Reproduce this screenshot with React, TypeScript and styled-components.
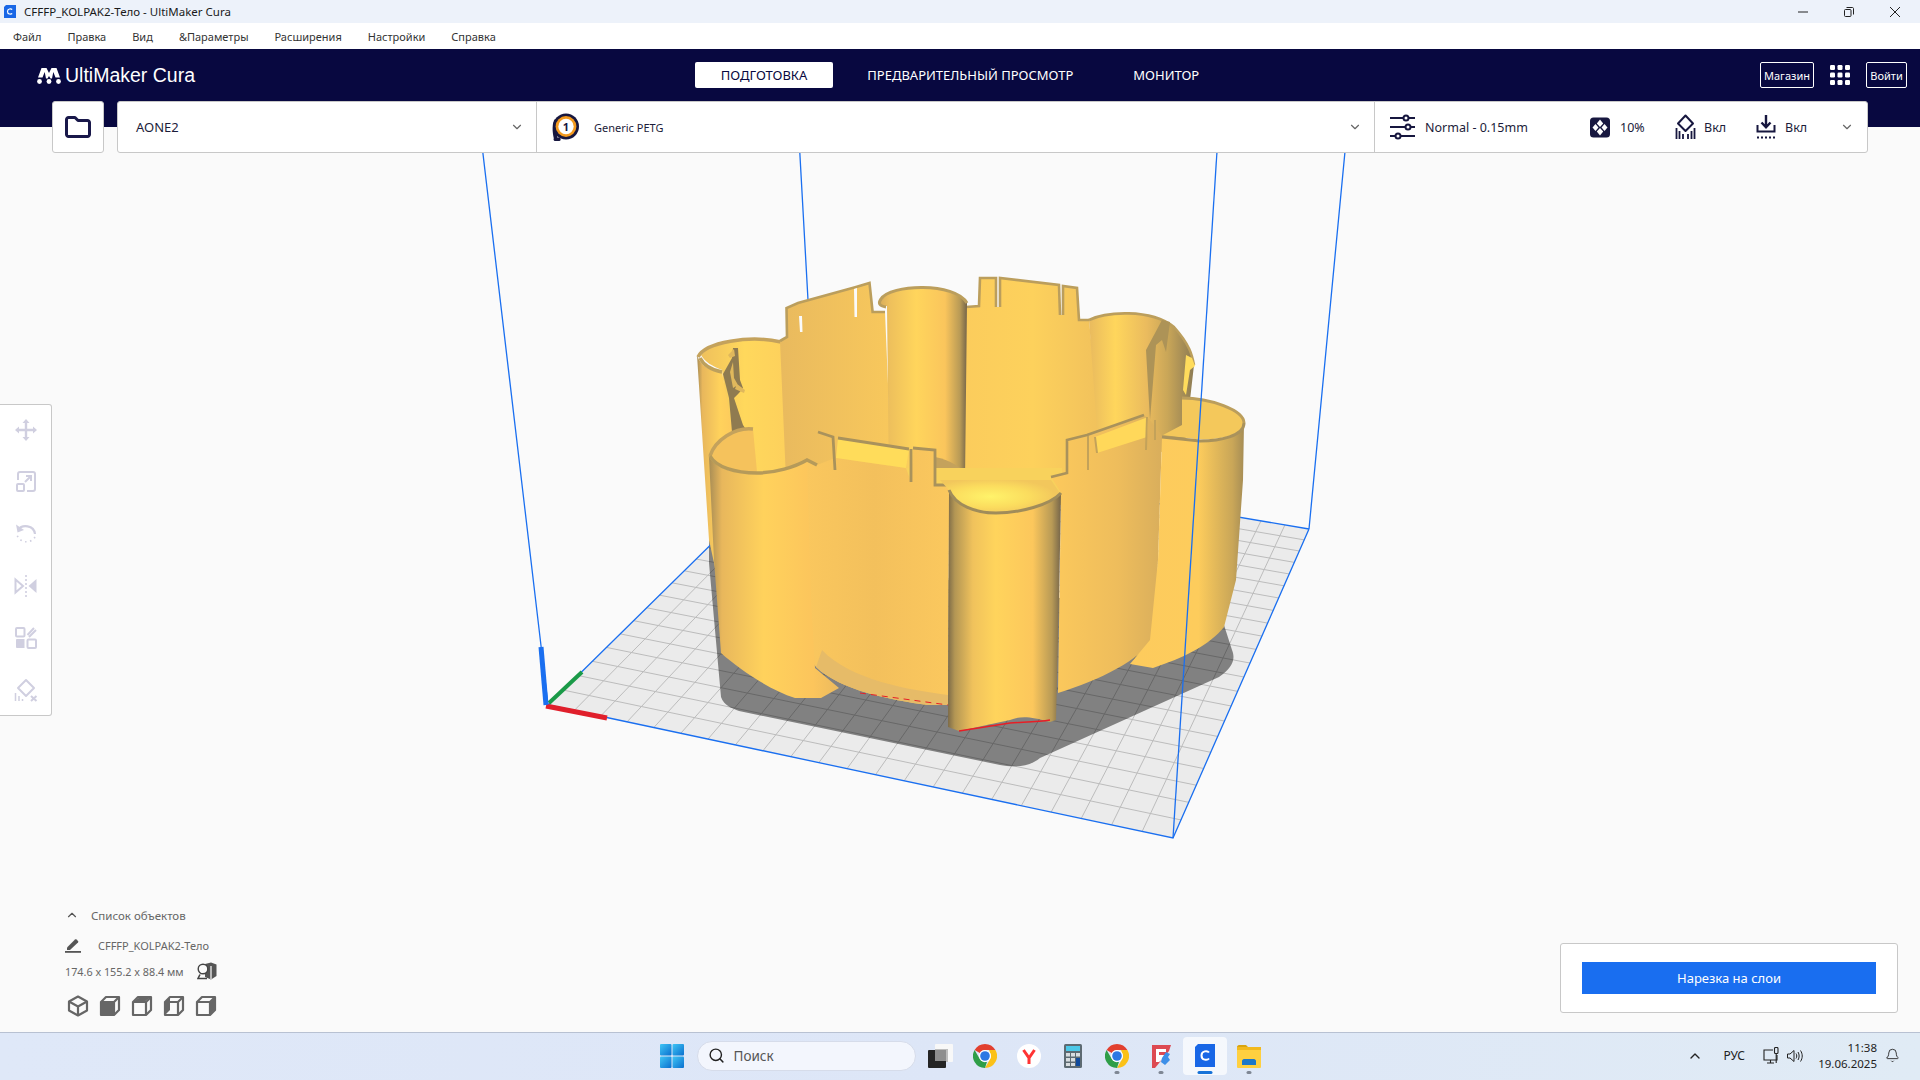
import React from 'react'
import styled, { createGlobalStyle } from 'styled-components'
import { ChevronDown, ChevronUp, Search, Bell } from 'lucide-react'

const GlobalStyle = createGlobalStyle`
html, body {
  margin: 0;
  padding: 0;
  width: 100%;
  height: 100%;
  overflow: hidden;
  font-family: "Noto Sans", "Open Sans", sans-serif;
}
#root { height: 100%; }
`

// plate corners in page pixels, the grid is a projective map of the unit square
const corners = { a: [548, 705], b: [1173, 838], c: [1309, 529], d: [812, 445] }

const project = (u: number, v: number) => {
    const [x0, y0] = corners.a
    const [x1, y1] = corners.b
    const [x2, y2] = corners.c
    const [x3, y3] = corners.d
    const dx1 = x1 - x2, dx2 = x3 - x2, sx = x0 - x1 + x2 - x3
    const dy1 = y1 - y2, dy2 = y3 - y2, sy = y0 - y1 + y2 - y3
    const den = dx1 * dy2 - dx2 * dy1
    const g = (sx * dy2 - dx2 * sy) / den
    const h = (dx1 * sy - sx * dy1) / den
    const a = x1 - x0 + g * x1, b = x3 - x0 + h * x3
    const d = y1 - y0 + g * y1, e = y3 - y0 + h * y3
    const w = g * u + h * v + 1
    return [(a * u + b * v + x0) / w, (d * u + e * v + y0) / w]
}

const gridLines = (() => {
    const out: string[] = []
    const n = 22
    for (let i = 1; i < n; i++) {
        const [ax, ay] = project(i / n, 0)
        const [bx, by] = project(i / n, 1)
        const [cx, cy] = project(0, i / n)
        const [dx, dy] = project(1, i / n)
        out.push(`M${ax} ${ay}L${bx} ${by}`, `M${cx} ${cy}L${dx} ${dy}`)
    }
    return out.join('')
})()

const Scene = () => (
    <SceneSvg viewBox="0 127 1920 905">
        <defs>
            <linearGradient id="cyl" x1="0" x2="1" y1="0" y2="0">
                <stop offset="0" stopColor="#7d6b48" />
                <stop offset=".06" stopColor="#b39654" />
                <stop offset=".22" stopColor="#f0c25c" />
                <stop offset=".42" stopColor="#ffd45c" />
                <stop offset=".75" stopColor="#fcc75c" />
                <stop offset=".92" stopColor="#b89a56" />
                <stop offset="1" stopColor="#75654a" />
            </linearGradient>
            <linearGradient id="cylBack" x1="0" x2="1" y1="0" y2="0">
                <stop offset="0" stopColor="#d8ad5c" />
                <stop offset=".12" stopColor="#eec05c" />
                <stop offset=".42" stopColor="#ffd55c" />
                <stop offset=".75" stopColor="#fac55c" />
                <stop offset=".92" stopColor="#b89a56" />
                <stop offset="1" stopColor="#75654a" />
            </linearGradient>
            <linearGradient id="insideLeft" x1="0" x2="1" y1="0" y2="0">
                <stop offset="0" stopColor="#efc05c" />
                <stop offset=".5" stopColor="#ffd85c" />
                <stop offset="1" stopColor="#fdd05c" />
            </linearGradient>
            <linearGradient id="lobeLeft" x1="0" x2="1" y1="0" y2="0">
                <stop offset="0" stopColor="#a88d55" />
                <stop offset=".1" stopColor="#e8b75c" />
                <stop offset=".42" stopColor="#ffd25c" />
                <stop offset=".8" stopColor="#fcc55c" />
                <stop offset="1" stopColor="#ebba5e" />
            </linearGradient>
            <linearGradient id="wallBack" x1="0" x2="1" y1="0" y2="0">
                <stop offset="0" stopColor="#e9ba5e" />
                <stop offset="1" stopColor="#f8c85c" />
            </linearGradient>
            <linearGradient id="wallMid" x1="0" x2="1" y1="0" y2="0">
                <stop offset="0" stopColor="#fbcc5c" />
                <stop offset=".5" stopColor="#fdd15c" />
                <stop offset="1" stopColor="#f0c05c" />
            </linearGradient>
            <linearGradient id="lobeBack" x1="0" x2="1" y1="0" y2="0">
                <stop offset="0" stopColor="#e9ba5e" />
                <stop offset=".25" stopColor="#ffd65c" />
                <stop offset=".55" stopColor="#eabb5e" />
                <stop offset=".75" stopColor="#c9a658" />
                <stop offset="1" stopColor="#8c7b54" />
            </linearGradient>
            <linearGradient id="wallRight" x1="0" x2="1" y1="0" y2="0">
                <stop offset="0" stopColor="#fcc95c" />
                <stop offset=".6" stopColor="#eebd5c" />
                <stop offset="1" stopColor="#d9ae5c" />
            </linearGradient>
            <linearGradient id="wallFront" x1="0" x2="1" y1="0" y2="0">
                <stop offset="0" stopColor="#fbc85e" />
                <stop offset=".5" stopColor="#f3c05c" />
                <stop offset="1" stopColor="#fbc85e" />
            </linearGradient>
            <linearGradient id="lobeRight" x1="0" x2="1" y1="0" y2="0">
                <stop offset="0" stopColor="#fdcb5d" />
                <stop offset=".6" stopColor="#fdcc5c" />
                <stop offset=".9" stopColor="#c9a658" />
                <stop offset="1" stopColor="#a68d55" />
            </linearGradient>
            <radialGradient id="floor" cx=".42" cy=".5" r=".55">
                <stop offset="0" stopColor="#fff36a" />
                <stop offset=".6" stopColor="#fbdc5e" />
                <stop offset="1" stopColor="#f2c75c" />
            </radialGradient>
        </defs>

        <path d="M548 705L1173 838L1309 529L812 445Z" fill="#ebebeb" />
        <path d={gridLines} stroke="#bcbcbc" strokeWidth="1" fill="none" />
        <path
            d="M709 563L721 697C724 706 732 708 739 711L1000 765C1012 767 1028 768 1040 758L1219 677C1232 668 1236 660 1232 650L1224 625L709 540Z"
            fill="#000"
            opacity=".45"
        />
        <path d="M548 705L1173 838L1309 529M548 705L812 445L1309 529" stroke="#1a6ff0" strokeWidth="1.300" fill="none" />
        <path d="M479 120L548 705M1348 120L1309 529M798 120L808 300" stroke="#1a6ff0" strokeWidth="1.300" fill="none" />

        <path d="M546 706L607 718" stroke="#e01f2b" strokeWidth="5" />
        <path d="M549 703L582 672" stroke="#1a9a48" strokeWidth="4" />
        <path d="M541 647L546 705" stroke="#1a6ff0" strokeWidth="5" />

        {/* back lobe on the left */}
        <path d="M701 355C712 340 750 336 781 341L788 500L735 490L722 370C712 366 705 362 701 355Z" fill="url(#insideLeft)" />
        <path d="M697 355C700 366 712 372 722 372L732 430L745 428L752 432L722 470L716 572L709 540Z" fill="url(#lobeLeft)" />
        <path d="M698 357C705 342 750 335 781 342" stroke="#c4a25c" strokeWidth="3.500" fill="none" />
        <path d="M700 358C704 366 712 370 722 372" stroke="#bda05c" strokeWidth="3.500" fill="none" />
        <path d="M733 348L738 348L740 380L743 388L739 393L734 398L743 425L745 428L732 432L729 398L723 374L732 358Z" fill="#8f7b50" />
        <path d="M728 355L734 349L735 356L730 358ZM733 362L734 378L738 385L733 388L730 372ZM737 384L745 390L744 393L735 389Z" fill="#e0b85c" />

        {/* back wall */}
        <path d="M780 341L787 337L786.500 308L798 303L856 287L869.500 283L872.600 312L885 312L892 480L786 480Z" fill="url(#wallBack)" />
        <path d="M780 341L787 337L786.500 308L798 303L856 287L869.500 283L872.600 312L885 312" stroke="#bb9e5c" strokeWidth="2.600" fill="none" />
        <path d="M799 316L802 316L802.500 332L800 332ZM854 289L857 288L857 317L854.500 317Z" fill="#fafafa" />

        <path d="M966 307L979 306L980 278L996 278L996 307L1000 307L1000 278L1059 285L1060 315L1063 315L1063 286L1077 288L1079 320L1089 320L1105 480L960 480Z" fill="url(#wallMid)" />
        <path d="M966 307L979 306L980 278L996 278L996 307M1000 307L1000 278L1059 285L1060 315M1063 315L1063 286L1077 288L1079 320L1089 320" stroke="#bb9e5c" strokeWidth="2.600" fill="none" />

        {/* cylinder at the back */}
        <path d="M887 306L882 306C879 305 879 302 880 300C888 284 955 282 967 302L965 480L889 480Z" fill="url(#cylBack)" />
        <path d="M886 307C879 306 878 303 881 299C890 284 955 282 967 303" stroke="#bb9e5c" strokeWidth="3" fill="none" />
        <path d="M935 457C950 460 962 468 965 473L965 482L935 482Z" fill="#c4a25c" />

        {/* lobe at the back right */}
        <path d="M1089 320C1105 312 1150 308 1174 327C1190 345 1192 355 1194 365L1190 400L1185 445L1100 470Z" fill="url(#lobeBack)" />
        <path d="M1089 320C1105 312 1150 308 1174 327C1190 345 1192 355 1194 365" stroke="#bb9e5c" strokeWidth="2.600" fill="none" />
        <path d="M1162 320L1170 322L1166 352L1162 340L1156 345L1150 420L1146 350Z" fill="#ad9357" />
        <path d="M1186 355L1192 358L1195 366L1190 370L1186 395L1183 390Z" fill="#ffdc5c" />

        {/* lobe on the right, inside */}
        <path d="M1182 398C1210 398 1244 410 1244 423C1244 436 1215 441 1195 439L1163 435L1182 425Z" fill="#f4c85b" />
        <path d="M1182 398C1210 398 1244 410 1244 423" stroke="#bb9e5c" strokeWidth="3" fill="none" />

        {/* floor under everything in front */}
        <path d="M836 468L1062 468L1062 505L836 505Z" fill="#f8d25c" />

        {/* front wall to the right */}
        <path d="M1051 477L1067 473L1067 440L1087 435L1144 415L1150 420L1160 433L1162 437L1158 560L1155 637C1140 660 1100 680 1058 693L1061 493Z" fill="url(#wallRight)" />
        <path d="M1095 437L1148 417L1147 437L1097 453Z" fill="#ffd85a" />
        <path d="M1051 477L1067 473L1067 440L1087 435L1144 415" stroke="#a9925c" strokeWidth="2.600" fill="none" />
        <path d="M1088 436L1088 470M1095 437L1097 453M1147 417L1146 450M1155 420L1155 440" stroke="#c3a25a" strokeWidth="2" fill="none" />

        <path d="M1162 437L1200 441C1220 441 1244 436 1244 423L1243 480L1236 580L1224 627C1210 645 1183 658 1153 668L1130 664L1150 640L1158 560Z" fill="url(#lobeRight)" />
        <path d="M1162 437L1200 441C1220 441 1244 436 1244 423" stroke="#a9925c" strokeWidth="3" fill="none" />

        {/* front wall to the left */}
        <path d="M796 470L806 460L817 465L835 458L906 468L911 482L913 448L935 450L935 485L952 485L949 520L948 705L928 705C890 700 840 690 816 667L796 640Z" fill="url(#wallFront)" />
        <path d="M838 438L909 449L906 468L836 458Z" fill="#ffdc5a" />
        <path d="M818 432L833 437L835 470M838 438L909 449M911 449L911 482M913 448L935 450L935 485L952 485" stroke="#a9925c" strokeWidth="2.800" fill="none" />
        <path d="M816 667C840 690 890 700 928 705L948 705L948 695C910 690 850 680 822 650Z" fill="#e6bb68" />

        {/* lobe at the front left */}
        <path d="M710 455C715 440 735 427 753 429L757 472C735 472 716 466 710 455Z" fill="#f5c25c" />
        <path d="M709 457C716 468 735 474 757 474C775 474 795 467 807 461L811 600L815 668L839 688L821 698L795 698C770 690 740 670 721 653L714 560Z" fill="url(#lobeLeft)" />
        <path d="M710 456C715 440 735 427 753 429" stroke="#c4a25c" strokeWidth="3.500" fill="none" />
        <path d="M710 456C716 467 735 473 757 473C775 473 795 467 807 460L817 465" stroke="#b59a5a" strokeWidth="3.500" fill="none" />

        {/* floor and the cylinder in front */}
        <path d="M940 480L1051 480L1060 493C1050 505 1020 513 996 513C975 513 955 505 949 490Z" fill="url(#floor)" />
        <path d="M949 490C955 505 975 513 996 513C1020 513 1050 505 1061 493L1059 600L1056 720L1050 722C1030 716 1020 716 1010 720L959 731L948 727Z" fill="url(#cyl)" />
        <path d="M949 490C955 505 975 513 996 513C1020 513 1050 505 1061 493" stroke="#a08c5a" strokeWidth="3" fill="none" />
        <path d="M959 731L1010 723C1025 722 1038 722 1050 720" stroke="#e81e25" strokeWidth="1.400" fill="none" />
        <path d="M860 693L948 705" stroke="#e81e25" strokeWidth="1" strokeDasharray="6 5" fill="none" />

        <path d="M1219 120L1173 838" stroke="#1a6ff0" strokeWidth="1.300" fill="none" />
    </SceneSvg>
)

const CuraMark = () => (
    <svg width="24" height="17" viewBox="0 0 24 17" fill="#fff">
        <circle cx="2.500" cy="14.500" r="2.400" />
        <circle cx="12" cy="14.500" r="2.400" />
        <circle cx="21.500" cy="14.500" r="2.400" />
        <path d="M4.500 1H9.500L12 6L14.500 1H19.500L23 10.500H18.500L16.300 5L15 11.500H13.500L12 9L10.500 11.500H9L7.700 5L5.500 10.500H1Z" />
    </svg>
)

const GridMenuIcon = () => (
    <svg width="20" height="20" viewBox="0 0 20 20" fill="#fff">
        {[0, 7.5, 15].map(y => [0, 7.5, 15].map(x => <rect key={`${x}-${y}`} x={x} y={y} width="5" height="5" rx="1.200" />))}
    </svg>
)

const FolderIcon = () => (
    <svg width="26" height="22" viewBox="0 0 26 22" fill="none" stroke="#19184a" strokeWidth="3" strokeLinejoin="round">
        <path d="M1.500 3.500C1.500 2.500 2.500 1.500 3.500 1.500H10L13 4.500H22.500C23.500 4.500 24.500 5.500 24.500 6.500V18.500C24.500 19.500 23.500 20.500 22.500 20.500H3.500C2.500 20.500 1.500 19.500 1.500 18.500Z" />
    </svg>
)

const ExtruderIcon = () => (
    <svg width="27" height="30" viewBox="0 0 27 30">
        <path d="M2 27C0 20 0 10 3 7L7 10L5 27Z" fill="#17173f" />
        <rect x="1.600" y="25.500" width="7" height="3.500" rx="1.500" fill="#17173f" />
        <circle cx="14" cy="14.500" r="13" fill="#17173f" />
        <circle cx="14" cy="14.500" r="10.400" fill="#f39a1f" />
        <circle cx="14" cy="14.500" r="7.700" fill="#fff" />
        <ExtruderDigit x="14" y="18.600" textAnchor="middle">1</ExtruderDigit>
    </svg>
)

const SlidersIcon = () => (
    <svg width="27" height="26" viewBox="0 0 27 26" fill="none" stroke="#17173f" strokeWidth="2">
        <path d="M1 4H14M20 4H26M1 13H16M22 13H26M1 22H6M12 22H26" />
        <circle cx="17" cy="4" r="2.500" />
        <circle cx="19" cy="13" r="2.500" />
        <circle cx="9" cy="22" r="2.500" />
    </svg>
)

const InfillIcon = () => (
    <svg width="20" height="25" viewBox="0 0 20 25">
        <rect y="2.500" width="20" height="20" rx="3.500" fill="#17173f" />
        <g fill="#fff">
            <path d="M10 4.500L13.200 8.500L10 12L6.800 8.500Z" />
            <path d="M10 13L13.200 16.500L10 20.500L6.800 16.500Z" />
            <path d="M5.500 9L8.500 12.500L5.500 16L2.500 12.500Z" />
            <path d="M14.500 9L17.500 12.500L14.500 16L11.500 12.500Z" />
        </g>
    </svg>
)

const SupportIcon = () => (
    <svg width="21" height="26" viewBox="0 0 21 26" fill="none" stroke="#17173f">
        <path d="M10.500 1.500L18 9.500L10.500 17L3 9.500Z" strokeWidth="2" strokeLinejoin="round" />
        <path d="M1.500 14V25M4.500 17V25M8 20V25M13 20V25M16.500 17V25M19.500 14V25" strokeWidth="1.800" />
    </svg>
)

const AdhesionIcon = () => (
    <svg width="20" height="26" viewBox="0 0 20 26" fill="none" stroke="#17173f" strokeWidth="2">
        <path d="M10 1V13M5.500 8.500L10 13.300L14.500 8.500" strokeWidth="2.400" />
        <path d="M1.500 11V17.500H18.500V11" />
        <path d="M1 23.500H19" strokeDasharray="2 2" strokeWidth="2" />
    </svg>
)

const Tool = ({ children }: { children: React.ReactNode }) => (
    <ToolSvg viewBox="0 0 24 24">{children}</ToolSvg>
)

const MoveTool = () => (
    <Tool>
        <path d="M12 1L15.500 5H13.200V10.800H19V8.500L23 12L19 15.500V13.200H13.200V19H15.500L12 23L8.500 19H10.800V13.200H5V15.500L1 12L5 8.500V10.800H10.800V5H8.500Z" fill="currentColor" />
    </Tool>
)
const ScaleTool = () => (
    <Tool>
        <g fill="none" stroke="currentColor" strokeWidth="2">
            <path d="M4 10V4C4 3 5 2 6 2H19C20 2 21 3 21 4V19C21 20 20 21 19 21H13" />
            <rect x="3" y="14" width="7" height="7" rx="1" />
            <path d="M11 12L17 6M12 6H17V11" />
        </g>
    </Tool>
)
const RotateTool = () => (
    <Tool>
        <path d="M4 8C8 2 20 3 21 12" fill="none" stroke="currentColor" strokeWidth="2.200" />
        <path d="M2 2.500L3.500 10.500L10 8Z" fill="currentColor" />
        <path d="M21 15A10 10 0 0 1 3 13" fill="none" stroke="currentColor" strokeWidth="1.600" strokeDasharray="1.500 3.500" />
    </Tool>
)
const MirrorTool = () => (
    <Tool>
        <path d="M1.500 5.500L9 12L1.500 18.500Z" fill="none" stroke="currentColor" strokeWidth="2" />
        <path d="M22.500 5L14.500 12L22.500 19Z" fill="currentColor" />
        <path d="M12 1V23" stroke="currentColor" strokeWidth="1.600" strokeDasharray="2 2" />
    </Tool>
)
const PerModelTool = () => (
    <Tool>
        <g fill="none" stroke="currentColor" strokeWidth="2">
            <rect x="2" y="2" width="8.500" height="8.500" rx="1" />
            <rect x="13.500" y="13.500" width="8.500" height="8.500" rx="1" />
            <path d="M13.500 9L20 2M15 11L22 4" />
        </g>
        <path d="M2 14C2 13.500 2.500 13 3 13H10.500V22H3C2.500 22 2 21.500 2 21Z" fill="currentColor" />
    </Tool>
)
const BlockerTool = () => (
    <Tool>
        <g fill="none" stroke="currentColor">
            <path d="M12 2L20 10L12 18L4 10Z" strokeWidth="2" strokeLinejoin="round" />
            <path d="M1.500 15V23M5 18V23M8.500 21V23" strokeWidth="1.500" />
            <path d="M17 18L22.500 23M22.500 18L17 23" strokeWidth="2" />
        </g>
    </Tool>
)

const ViewCube = ({ face }: { face: string }) => (
    <svg width="22" height="22" viewBox="0 0 22 22" fill="none" stroke="#666" strokeWidth="2.200" strokeLinejoin="round">
        {face === 'iso' ? (
            <>
                <path d="M11 1.500L20 6.500V15.500L11 20.500L2 15.500V6.500Z" />
                <path d="M2 6.500L11 11.500L20 6.500M11 11.500V20.500" />
            </>
        ) : (
            <>
                <path d="M2 7L7 2H20V15L15 20H2Z" />
                <path d="M2 7H15V20M15 7L20 2" />
                {face === 'front' && <path d="M3 8H14V19H3Z" fill="#666" stroke="none" />}
                {face === 'top' && <path d="M3 6.500L7.500 3H18L14 6.500Z" fill="#666" stroke="none" />}
                {face === 'left' && <path d="M2 7L7 2V15L2 20Z" fill="#666" stroke="none" />}
                {face === 'right' && <path d="M15.500 7L19.500 3V14.500L15.500 19Z" fill="#666" stroke="none" />}
            </>
        )}
    </svg>
)

const PencilIcon = () => (
    <svg width="16" height="15" viewBox="0 0 16 15">
        <path d="M2 9.500L10 1.500C10.500 1 11 1 11.500 1.500L13 3C13.500 3.500 13.500 4 13 4.500L5 12H2Z" fill="#555" />
        <rect y="13" width="16" height="1.800" fill="#555" />
    </svg>
)

const ObjectBoxIcon = () => (
    <svg width="20" height="18" viewBox="0 0 20 18">
        <path d="M8 2L14 0.500L19.500 2.500V14L14 17.500L8 15Z" fill="#555" />
        <path d="M14 4V17" stroke="#fff" strokeWidth="1.200" />
        <circle cx="6" cy="7" r="4.800" fill="#fafafa" stroke="#444" strokeWidth="1.400" />
        <path d="M3 12.500L1 16.500H10" fill="none" stroke="#444" strokeWidth="1.600" />
    </svg>
)

const WindowsLogo = () => (
    <svg width="24" height="24" viewBox="0 0 24 24">
        <defs>
            <linearGradient id="winPane" x1="0" x2="1" y1="0" y2="1">
                <stop offset="0" stopColor="#3fc5f5" />
                <stop offset="1" stopColor="#0a70cf" />
            </linearGradient>
        </defs>
        <rect width="11.500" height="11.500" rx="1" fill="url(#winPane)" />
        <rect x="12.500" width="11.500" height="11.500" rx="1" fill="url(#winPane)" />
        <rect y="12.500" width="11.500" height="11.500" rx="1" fill="url(#winPane)" />
        <rect x="12.500" y="12.500" width="11.500" height="11.500" rx="1" fill="url(#winPane)" />
    </svg>
)

const WidgetsIcon = () => (
    <svg width="25" height="24" viewBox="0 0 25 24">
        <rect x="7" y="0" width="18" height="18" rx="1" fill="#f8f8f8" />
        <rect x="7" y="5" width="13" height="13" fill="#bdbdbd" />
        <rect x="0" y="6" width="18" height="18" rx="1" fill="#242424" />
        <rect x="7" y="6" width="11" height="11" fill="#8e8e8e" />
    </svg>
)

const ChromeIcon = () => (
    <svg width="24" height="24" viewBox="0 0 24 24">
        <path d="M12 0A12 12 0 0 1 22.400 6H12A6 6 0 0 0 6.800 9L1.600 6A12 12 0 0 1 12 0Z" fill="#e2402f" />
        <path d="M22.400 6A12 12 0 0 1 12 24L17.200 15A6 6 0 0 0 17.200 9L16 6Z" fill="#fbc118" />
        <path d="M1.600 6L6.800 15A6 6 0 0 0 14 17.700L12 24A12 12 0 0 1 1.600 6Z" fill="#2f9e48" />
        <circle cx="12" cy="12" r="6" fill="#fff" />
        <circle cx="12" cy="12" r="4.800" fill="#2c78e4" />
    </svg>
)

const YandexIcon = () => (
    <svg width="24" height="24" viewBox="0 0 24 24">
        <circle cx="12" cy="12" r="12" fill="#fff" />
        <path d="M6.500 6L12 14V20M17.500 6L12 14" fill="none" stroke="#f33" strokeWidth="3" />
    </svg>
)

const CalcIcon = () => (
    <svg width="18" height="24" viewBox="0 0 18 24">
        <rect width="18" height="24" rx="1.500" fill="#5d6a72" />
        <rect x="2" y="2" width="14" height="5" fill="#4cc8e8" />
        <g fill="#d8dde0">
            <rect x="2" y="9" width="4" height="3.500" />
            <rect x="7" y="9" width="4" height="3.500" />
            <rect x="2" y="14" width="4" height="3.500" />
            <rect x="7" y="14" width="4" height="3.500" />
            <rect x="2" y="19" width="4" height="3" />
            <rect x="7" y="19" width="4" height="3" />
        </g>
        <rect x="12" y="9" width="4" height="3.500" fill="#d8dde0" />
        <rect x="12" y="14" width="4" height="8" fill="#114a9c" />
    </svg>
)

const FusionIcon = () => (
    <svg width="21" height="24" viewBox="0 0 21 24">
        <path d="M2 1H21L19 7L5 24H2Z" fill="#dd4a52" />
        <path d="M6 5H16V8H9V11H14V14L9 18H6Z" fill="#fff" />
        <path d="M12 14L16 8L20 10L18 13L20 16L15 21L11 18Z" fill="#3d8fe8" />
    </svg>
)

const CuraTaskIcon = () => (
    <svg width="20" height="23" viewBox="0 0 20 23">
        <path d="M3 0H20V23H0V3Z" fill="#1967e6" />
        <path d="M14 8.500C12.500 6.500 6.500 6.500 6.500 11.500C6.500 16.500 12.500 16.500 14 14.500" fill="none" stroke="#fff" strokeWidth="2" />
    </svg>
)

const FilesIcon = () => (
    <svg width="24" height="24" viewBox="0 0 24 24">
        <path d="M0 3C0 2 1 1 2 1H9L11 3H0Z" fill="#d9a40f" />
        <rect y="3" width="24" height="21" rx="1" fill="#ffd040" />
        <rect y="3" width="24" height="3" fill="#f2b91d" />
        <path d="M7 15H17C18 15 19 16 19 17V21H5V17C5 16 6 15 7 15Z" fill="#1d78c8" />
    </svg>
)

const NetworkIcon = () => (
    <svg width="16" height="18" viewBox="0 0 16 18" fill="none" stroke="#222" strokeWidth="1.100">
        <path d="M10 3H1V13H14V8" />
        <path d="M4 16H11M7.500 13V16" />
        <rect x="11.500" y="0.500" width="3.500" height="6" rx="1" />
        <path d="M13.200 6.500V16" />
    </svg>
)

const SpeakerIcon = () => (
    <svg width="17" height="14" viewBox="0 0 17 14" fill="none" stroke="#222" strokeWidth="1">
        <path d="M0.500 5H3L7 1.500V12.500L3 9H0.500Z" />
        <path d="M9 4.500C10 6 10 8 9 9.500M11 3C12.500 5.500 12.500 8.500 11 11M13.500 1.500C15.800 5 15.800 9 13.500 12.500" />
    </svg>
)

const CuraWindowIcon = () => (
    <svg width="12" height="13" viewBox="0 0 12 13">
        <path d="M2 0H12V13H0V2Z" fill="#1967e6" />
        <path d="M8.200 4.500C7 3.500 3.500 3.500 3.500 6.500C3.500 9.500 7 9.500 8.200 8.500" fill="none" stroke="#fff" strokeWidth="1.200" />
    </svg>
)

const App = () => {
    return (
        <Shell>
            <GlobalStyle />
            <TitleBar>
                <TitleText>
                    <CuraWindowIcon />
                    CFFFP_KOLPAK2-Тело - UltiMaker Cura
                </TitleText>
                <WindowButtons>
                    <svg width="10" height="10" viewBox="0 0 10 10"><path d="M0 5H10" stroke="#222" /></svg>
                    <svg width="10" height="10" viewBox="0 0 10 10" fill="none" stroke="#222">
                        <rect x=".5" y="2.500" width="6.500" height="7" rx="1" />
                        <path d="M2.500 .5H8.500C9 .5 9.500 1 9.500 1.500V7.500" />
                    </svg>
                    <svg width="10" height="10" viewBox="0 0 10 10"><path d="M0 0L10 10M10 0L0 10" stroke="#222" /></svg>
                </WindowButtons>
            </TitleBar>

            <MenuBar>
                {['Файл', 'Правка', 'Вид', '&Параметры', 'Расширения', 'Настройки', 'Справка'].map(m => (
                    <MenuItem key={m}>{m}</MenuItem>
                ))}
            </MenuBar>

            <Header>
                <NavRow>
                    <Logo>
                        <CuraMark />
                        <LogoText>UltiMaker Cura</LogoText>
                    </Logo>
                    <Tabs>
                        <Tab $active>ПОДГОТОВКА</Tab>
                        <Tab>ПРЕДВАРИТЕЛЬНЫЙ ПРОСМОТР</Tab>
                        <Tab>МОНИТОР</Tab>
                    </Tabs>
                    <HeaderRight>
                        <OutlineButton $width={54}>Магазин</OutlineButton>
                        <GridMenuIcon />
                        <OutlineButton $width={41}>Войти</OutlineButton>
                    </HeaderRight>
                </NavRow>
            </Header>

            <Viewport>
                <Scene />

                <ToolbarRow>
                    <FolderButton><FolderIcon /></FolderButton>
                    <Bar>
                        <MachineSelect>
                            AONE2
                            <ChevronDown size={14} color="#666" />
                        </MachineSelect>
                        <MaterialSelect>
                            <ExtruderIcon />
                            <MaterialName>Generic PETG</MaterialName>
                            <ChevronDown size={14} color="#666" />
                        </MaterialSelect>
                        <SettingsSection>
                            <SettingItem $width={201} $gap={9}><SlidersIcon />Normal - 0.15mm</SettingItem>
                            <SettingItem $width={85} $gap={10}><InfillIcon />10%</SettingItem>
                            <SettingItem $width={81} $gap={8}><SupportIcon />Вкл</SettingItem>
                            <SettingItem $width={84} $gap={9}><AdhesionIcon />Вкл</SettingItem>
                            <ChevronDown size={14} color="#666" />
                        </SettingsSection>
                    </Bar>
                </ToolbarRow>

                <LeftTools>
                    <MoveTool />
                    <ScaleTool />
                    <RotateTool />
                    <MirrorTool />
                    <PerModelTool />
                    <BlockerTool />
                </LeftTools>

                <ObjectList>
                    <ObjectHead>
                        <ChevronUp size={14} color="#555" />
                        Список объектов
                    </ObjectHead>
                    <ObjectName>
                        <PencilIcon />
                        CFFFP_KOLPAK2-Тело
                    </ObjectName>
                    <ObjectSize>
                        174.6 x 155.2 x 88.4 мм
                        <ObjectBoxIcon />
                    </ObjectSize>
                    <ViewRow>
                        <ViewCube face="iso" />
                        <ViewCube face="front" />
                        <ViewCube face="top" />
                        <ViewCube face="left" />
                        <ViewCube face="right" />
                    </ViewRow>
                </ObjectList>

                <SliceCard>
                    <SliceButton>Нарезка на слои</SliceButton>
                </SliceCard>
            </Viewport>

            <Taskbar>
                <span />
                <TaskCenter>
                    <TaskIcon><WindowsLogo /></TaskIcon>
                    <SearchBox>
                        <Search size={17} color="#222" />
                        Поиск
                    </SearchBox>
                    <TaskIcon><WidgetsIcon /></TaskIcon>
                    <TaskIcon><ChromeIcon /></TaskIcon>
                    <TaskIcon><YandexIcon /></TaskIcon>
                    <TaskIcon><CalcIcon /></TaskIcon>
                    <TaskIcon $state="open"><ChromeIcon /></TaskIcon>
                    <TaskIcon $state="open"><FusionIcon /></TaskIcon>
                    <TaskIcon $state="active"><CuraTaskIcon /></TaskIcon>
                    <TaskIcon $state="open"><FilesIcon /></TaskIcon>
                </TaskCenter>
                <Tray>
                    <ChevronUp size={16} color="#222" />
                    <TrayLang>РУС</TrayLang>
                    <NetworkIcon />
                    <SpeakerIcon />
                    <Clock>
                        <span>11:38</span>
                        <span>19.06.2025</span>
                    </Clock>
                    <Bell size={15} color="#222" strokeWidth={1.400} />
                </Tray>
            </Taskbar>
        </Shell>
    )
}

export default App


const Shell = styled.div`
display: flex;
flex-direction: column;
width: 1920px;
height: 1080px;
overflow: hidden;
background-color: #fafafa;
`

const TitleBar = styled.div`
display: flex;
align-items: center;
justify-content: space-between;
height: 23px;
flex-shrink: 0;
background-color: #edf2fa;
`

const TitleText = styled.div`
display: flex;
align-items: center;
gap: 8px;
padding-left: 4px;
font-size: 11.500px;
color: #1a1a1a;
`

const WindowButtons = styled.div`
display: flex;
align-items: center;
gap: 36px;
padding-right: 20px;
`

const MenuBar = styled.div`
display: flex;
align-items: center;
gap: 26px;
height: 26px;
flex-shrink: 0;
padding-left: 13px;
background-color: white;
`

const MenuItem = styled.div`
font-size: 11px;
color: #333;
`

const Header = styled.div`
height: 78px;
flex-shrink: 0;
background-color: #080840;
`

const NavRow = styled.div`
display: grid;
grid-template-columns: 1fr auto 1fr;
align-items: center;
height: 52px;
padding: 0 13px;
`

const Logo = styled.div`
display: flex;
align-items: center;
gap: 4px;
margin-left: 24px;
color: white;
`

const LogoText = styled.div`
font-family: "Liberation Sans", sans-serif;
font-size: 19.500px;
`

const Tabs = styled.div`
display: flex;
gap: 8px;
`

const Tab = styled.div<{ $active?: boolean }>`
display: flex;
align-items: center;
height: 26px;
padding: 0 26px;
border-radius: 2px;
font-size: 13px;
color: ${({ $active }) => ($active ? '#080840' : 'white')};
background-color: ${({ $active }) => ($active ? 'white' : 'transparent')};
`

const HeaderRight = styled.div`
display: flex;
align-items: center;
justify-content: flex-end;
gap: 16px;
`

const OutlineButton = styled.div<{ $width: number }>`
display: flex;
align-items: center;
justify-content: center;
box-sizing: border-box;
width: ${({ $width }) => $width}px;
height: 26px;
border: 1px solid white;
border-radius: 2px;
font-size: 11px;
color: white;
`

const Viewport = styled.div`
position: relative;
flex: 1;
min-height: 0;
background-color: #fafafa;
`

const SceneSvg = styled.svg`
position: absolute;
top: 0;
left: 0;
display: block;
width: 1920px;
height: 905px;
`

const ToolbarRow = styled.div`
position: relative;
display: flex;
gap: 13px;
height: 52px;
margin: -26px 52px 0 52px;
`

const FolderButton = styled.div`
display: flex;
align-items: center;
justify-content: center;
width: 52px;
box-sizing: border-box;
background-color: white;
border: 1px solid #c8c8c8;
border-radius: 3px;
`

const Bar = styled.div`
display: flex;
flex: 1;
background-color: white;
border: 1px solid #c8c8c8;
border-radius: 3px;
font-size: 13px;
color: #1c1c3a;
`

const MachineSelect = styled.div`
display: flex;
align-items: center;
justify-content: space-between;
box-sizing: border-box;
width: 419px;
padding: 0 12px 0 18px;
border-right: 1px solid #c8c8c8;
`

const MaterialSelect = styled.div`
display: flex;
align-items: center;
box-sizing: border-box;
width: 838px;
padding: 0 12px 0 15px;
border-right: 1px solid #c8c8c8;
`

const MaterialName = styled.div`
flex: 1;
margin-left: 15px;
font-size: 11px;
`

const SettingsSection = styled.div`
display: flex;
align-items: center;
padding-left: 14px;
`

const SettingItem = styled.div<{ $width: number, $gap: number }>`
display: flex;
align-items: center;
width: ${({ $width }) => $width}px;
gap: ${({ $gap }) => $gap}px;
font-size: 12.500px;
`

const ExtruderDigit = styled.text`
font-family: "Noto Sans", sans-serif;
font-size: 11px;
font-weight: 700;
fill: #17173f;
`

const LeftTools = styled.div`
position: absolute;
top: 277px;
left: 0;
display: flex;
flex-direction: column;
align-items: center;
gap: 28px;
box-sizing: border-box;
width: 52px;
height: 312px;
padding-top: 13px;
background-color: white;
border: 1px solid #c8c8c8;
border-left: 0;
border-radius: 0 3px 3px 0;
color: #d0cfe0;
`

const ToolSvg = styled.svg`
width: 24px;
height: 24px;
flex-shrink: 0;
`

const ObjectList = styled.div`
position: absolute;
left: 65px;
bottom: 15px;
display: flex;
flex-direction: column;
font-size: 11px;
color: #666;
`

const ObjectHead = styled.div`
display: flex;
align-items: center;
gap: 12px;
height: 20px;
font-size: 11.500px;
`

const ObjectName = styled.div`
display: flex;
align-items: center;
gap: 17px;
height: 20px;
margin-top: 10px;
`

const ObjectSize = styled.div`
display: flex;
align-items: center;
gap: 13px;
height: 20px;
margin-top: 6px;
font-size: 10.800px;
`

const ViewRow = styled.div`
display: flex;
gap: 10px;
margin: 14px 0 0 2px;
`

const SliceCard = styled.div`
position: absolute;
right: 22px;
bottom: 19px;
display: flex;
align-items: center;
justify-content: center;
box-sizing: border-box;
width: 338px;
height: 70px;
background-color: white;
border: 1px solid #c8c8c8;
border-radius: 3px;
`

const SliceButton = styled.div`
display: flex;
align-items: center;
justify-content: center;
width: 294px;
height: 32px;
background-color: #196ef0;
font-size: 13px;
color: white;
`

const Taskbar = styled.div`
display: grid;
grid-template-columns: 1fr auto 1fr;
align-items: center;
height: 48px;
box-sizing: border-box;
flex-shrink: 0;
padding-bottom: 2px;
border-top: 1px solid #b8c1d2;
background: linear-gradient(90deg, #dfe8f8, #dde6f7 50%, #e0ebf5);
`

const TaskCenter = styled.div`
display: flex;
align-items: center;
gap: 0;
`

const TaskIcon = styled.div<{ $state?: 'open' | 'active' }>`
position: relative;
display: flex;
align-items: center;
justify-content: center;
width: 44px;
height: 38px;
border-radius: 4px;
background-color: ${({ $state }) => ($state === 'active' ? 'rgba(255,255,255,.7)' : 'transparent')};
&::after {
  content: "";
  display: ${({ $state }) => ($state ? 'block' : 'none')};
  position: absolute;
  bottom: 1px;
  left: 50%;
  transform: translateX(-50%);
  width: ${({ $state }) => ($state === 'active' ? '15px' : '5px')};
  height: 3px;
  border-radius: 2px;
  background-color: ${({ $state }) => ($state === 'active' ? '#1672d8' : '#7f8794')};
}
`

const SearchBox = styled.div`
display: flex;
align-items: center;
gap: 9px;
box-sizing: border-box;
width: 219px;
height: 30px;
margin: 0 3px;
padding-left: 10px;
border-radius: 15px;
background-color: #f3f6fd;
border: 1px solid #d6dcea;
font-size: 13.500px;
color: #555;
`

const Tray = styled.div`
display: flex;
align-items: center;
justify-content: flex-end;
gap: 0;
padding-right: 20px;
font-size: 12px;
color: #222;
svg:nth-of-type(3) { margin-left: 8px; }
`

const TrayLang = styled.div`
margin: 0 18px 0 20px;
`

const Clock = styled.div`
display: flex;
flex-direction: column;
align-items: flex-end;
width: 73px;
margin-right: 8px;
line-height: 16px;
font-size: 11.500px;
`
